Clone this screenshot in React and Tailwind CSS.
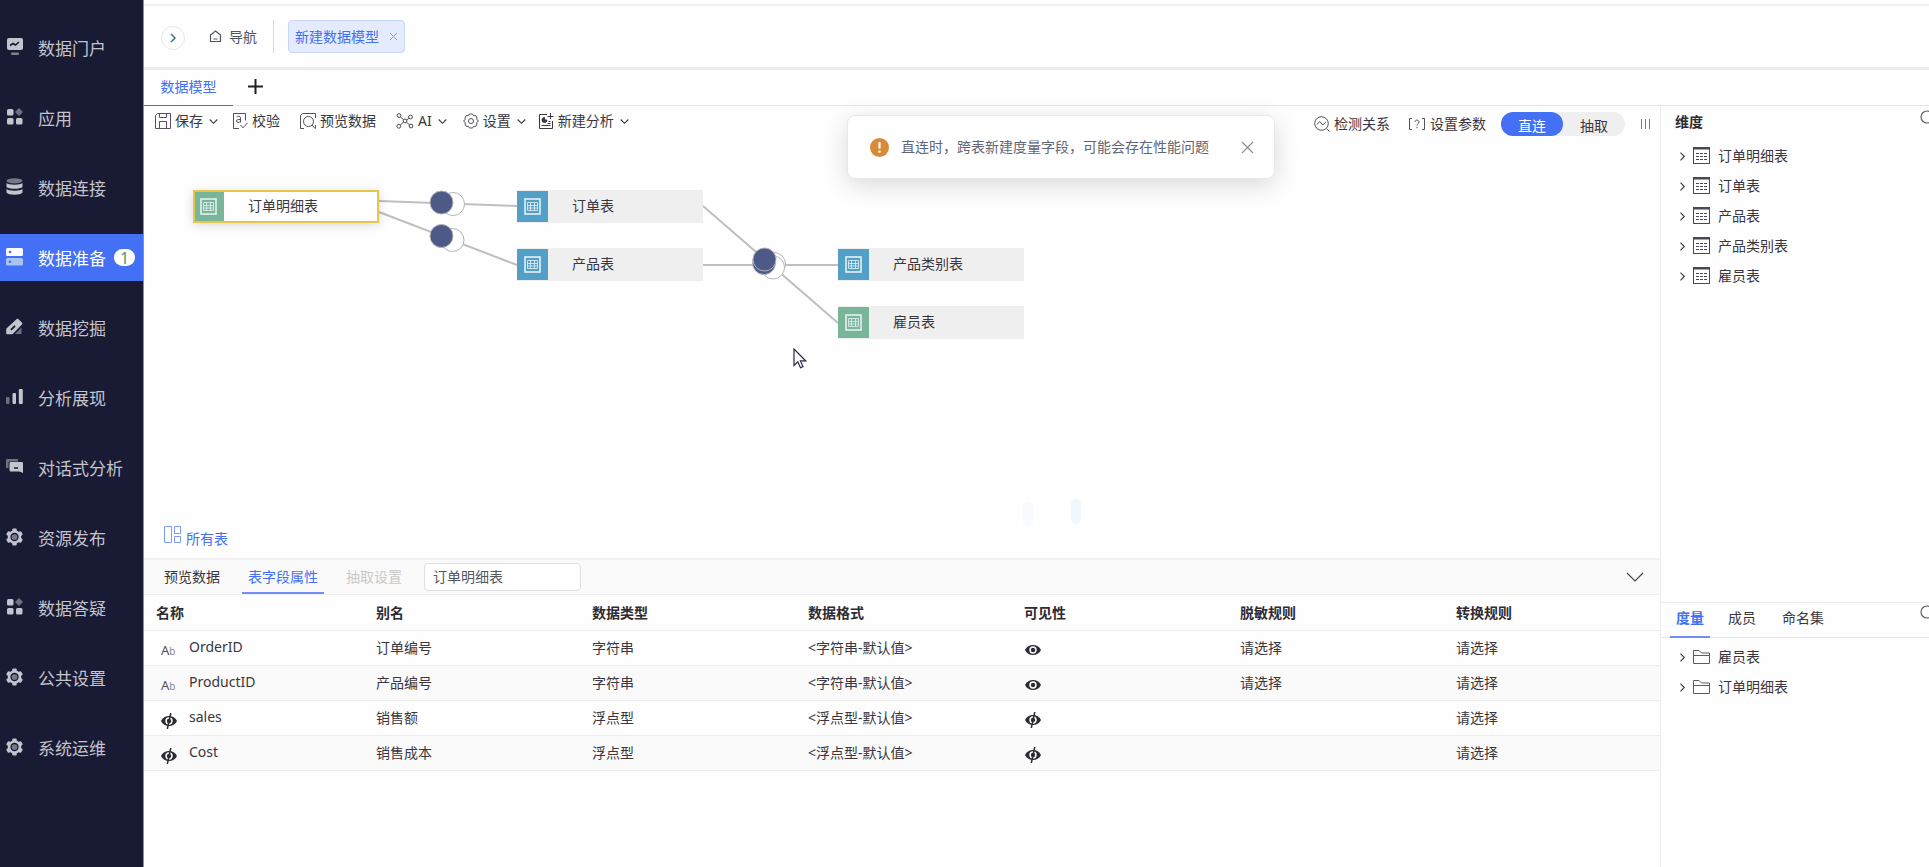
import { useState } from "react";

const menuItems = [
  { label: "数据门户", icon: PortalIcon },
  { label: "应用", icon: AppsIcon },
  { label: "数据连接", icon: DatabaseIcon },
  { label: "数据准备", icon: ServerIcon, badge: 1 },
  { label: "数据挖掘", icon: DigIcon },
  { label: "分析展现", icon: BarsIcon },
  { label: "对话式分析", icon: ChatIcon },
  { label: "资源发布", icon: GearIcon },
  { label: "数据答疑", icon: AppsIcon },
  { label: "公共设置", icon: GearIcon },
  { label: "系统运维", icon: GearIcon },
];

const nodes = [
  { name: "订单明细表", x: 49, y: 50, tone: "green", selected: true },
  { name: "订单表", x: 373, y: 50, tone: "blue" },
  { name: "产品表", x: 373, y: 108, tone: "blue" },
  { name: "产品类别表", x: 694, y: 108, tone: "blue" },
  { name: "雇员表", x: 694, y: 166, tone: "green" },
];

const columns = [
  "名称",
  "别名",
  "数据类型",
  "数据格式",
  "可见性",
  "脱敏规则",
  "转换规则",
];

const fields = [
  { name: "OrderID", alias: "订单编号", type: "字符串", visible: true },
  { name: "ProductID", alias: "产品编号", type: "字符串", visible: true },
  { name: "sales", alias: "销售额", type: "浮点型", visible: false },
  { name: "Cost", alias: "销售成本", type: "浮点型", visible: false },
];

const dimensions = ["订单明细表", "订单表", "产品表", "产品类别表", "雇员表"];
const measures = ["雇员表", "订单明细表"];

/* ---------- sidebar icons ---------- */

function PortalIcon() {
  return (
    <svg width="17" height="18" viewBox="0 0 17 18" fill="currentColor">
      <rect x="1" y="0" width="16" height="12" rx="2" />
      <path d="M4 7.500l3-2 2.500 1.500L13 4" fill="none" stroke="#191b34" strokeWidth="1.600" />
      <rect x="5" y="14.500" width="8" height="2.500" rx="1" opacity=".6" />
    </svg>
  );
}

function AppsIcon() {
  return (
    <svg width="17" height="18" viewBox="0 0 17 18" fill="currentColor">
      <rect x="1" y="1" width="6.500" height="6.500" rx="1.500" />
      <rect x="1" y="10" width="6.500" height="6.500" rx="1.500" />
      <rect x="10" y="10" width="6.500" height="6.500" rx="1.500" />
      <path d="M13 0l4 4-4 4-4-4z" opacity=".5" />
    </svg>
  );
}

function DatabaseIcon() {
  return (
    <svg width="17" height="18" viewBox="0 0 17 18" fill="currentColor">
      <ellipse cx="8.500" cy="2.800" rx="8" ry="2.600" opacity=".55" />
      <path d="M.5 5c2 2.200 14 2.200 16 0v4c-2 2.400-14 2.400-16 0z" />
      <path d="M.5 11c2 2.200 14 2.200 16 0v3.500c-2 3-14 3-16 0z" />
    </svg>
  );
}

function ServerIcon() {
  return (
    <svg width="17" height="18" viewBox="0 0 17 18">
      <rect x="0" y="0" width="17" height="8" rx="1.500" fill="#fff" />
      <rect x="0" y="10" width="17" height="7.500" rx="1.500" fill="#a9c3f2" />
      <circle cx="4" cy="4" r="1.300" fill="#4370f5" />
      <circle cx="4" cy="13.800" r="1.300" fill="#4370f5" />
    </svg>
  );
}

function DigIcon() {
  return (
    <svg width="17" height="18" viewBox="0 0 17 18" fill="currentColor">
      <path d="M15.500 9.500V16H9z" opacity=".5" />
      <path d="M10.500 1.200c.6-.6 1.400-.6 2 0l3.400 3.300c.6.6.6 1.400 0 2L7 15.800c-.3.3-.7.5-1.200.5H1.500c-.8 0-1.300-.5-1.300-1.300v-3.500c0-.5.2-1 .5-1.300z" />
      <path d="M5.500 11.300l3-3" stroke="#191b34" strokeWidth="1.900" strokeLinecap="round" />
    </svg>
  );
}

function BarsIcon() {
  return (
    <svg width="17" height="18" viewBox="0 0 17 18" fill="currentColor">
      <rect x="0" y="9" width="3.500" height="7" rx="1" opacity=".5" />
      <rect x="6.500" y="5" width="3.500" height="11" rx="1" />
      <rect x="12.800" y="1" width="4" height="15" rx="1" />
    </svg>
  );
}

function ChatIcon() {
  return (
    <svg width="17" height="18" viewBox="0 0 17 18">
      <path d="M0 2.500C0 1.700.5 1 1.500 1H12v2.500H4c-1 0-1.500.5-1.500 1.500v5H0z" fill="currentColor" opacity=".5" />
      <path d="M5 4h10.500c1 0 1.500.5 1.500 1.500V15l-3.500-1.500H5c-1 0-1.500-.6-1.500-1.500V5.500C3.500 4.500 4 4 5 4z" fill="currentColor" />
      <path d="M8 10h4" stroke="#191b34" strokeWidth="1.500" />
    </svg>
  );
}

function GearIcon() {
  return (
    <svg width="17" height="18" viewBox="0 0 17 18">
      <g fill="currentColor">
        <circle cx="8.500" cy="9" r="6.800" />
        <rect x="6.300" y=".5" width="4.400" height="17" rx="1" />
        <rect x="6.300" y=".5" width="4.400" height="17" rx="1" transform="rotate(60 8.500 9)" />
        <rect x="6.300" y=".5" width="4.400" height="17" rx="1" transform="rotate(120 8.500 9)" />
      </g>
      <circle cx="8.500" cy="9" r="3.500" fill="#77788a" stroke="#191b34" strokeWidth="1.300" />
    </svg>
  );
}

/* ---------- line icons ---------- */

function LineIcon({ size = 16, className = "", children }) {
  return (
    <svg
      width={size}
      height={size}
      viewBox="0 0 16 16"
      fill="none"
      stroke="currentColor"
      className={`shrink-0 ${className}`}
    >
      {children}
    </svg>
  );
}

function Chevron({ direction = "down", className = "" }) {
  return (
    <svg
      width="9"
      height="9"
      viewBox="0 0 9 9"
      fill="none"
      stroke="currentColor"
      strokeWidth="1.100"
      className={`shrink-0 ${className}`}
    >
      <path d={direction === "down" ? "M.7 2.500l3.800 3.800 3.800-3.800" : "M2.500.7l3.800 3.800-3.800 3.800"} />
    </svg>
  );
}

function SaveIcon() {
  return (
    <LineIcon className="text-[#5b4f5c]">
      <path d="M2.500.5h13v15H.5v-13z" />
      <path d="M4.500 1v3.500h7V1M4.500 15V8.500h7V15" />
    </LineIcon>
  );
}

function CheckIcon() {
  return (
    <LineIcon className="text-[#55505a]">
      <path d="M13.500 7.500v-7h-12v15H7" />
      <path d="M4.500 4c1-1.200 4-1.200 4 .8v4.700M8.500 6.500c-2 0-4.200 0-4.200 1.500S7.500 10 8.500 8" />
      <path d="M8.500 12l2.500 2.800 4.500-5" />
    </LineIcon>
  );
}

function PreviewIcon() {
  return (
    <LineIcon className="text-[#55505a]">
      <path d="M4 15.500H.5v-13l2-2h13V5M15.500 12v3.500" />
      <circle cx="8.500" cy="8.500" r="5" />
      <path d="M12 12l3 3.500" />
    </LineIcon>
  );
}

function AiIcon() {
  return (
    <svg width="18" height="16" viewBox="0 0 18 16" fill="none" stroke="#4e4a55" className="shrink-0">
      <circle cx="3" cy="2.500" r="1.900" />
      <circle cx="14.500" cy="4" r="1.900" />
      <circle cx="9" cy="8" r="1.900" />
      <circle cx="2.800" cy="13.300" r="1.900" />
      <circle cx="15" cy="13" r="1.900" />
      <path d="M4.400 4L7.600 6.700M10.700 7L13 5.200M7.400 9.200L4.300 12M10.500 9.300l3 2.500" />
    </svg>
  );
}

function SettingIcon() {
  return (
    <LineIcon className="text-[#55505a]">
      <path d="M5.500 2.500L6.500 1h3l1 1.500 2.500.3L14 5l-.3 1.500L15.500 8l-1.800 1.500L14 11l-1 2.200-2.500.3-1 1.500h-3l-1-1.500-2.500-.3L2 11l.3-1.500L.5 8l1.800-1.500L2 5l1-2.200z" />
      <circle cx="8" cy="8" r="2.500" />
    </LineIcon>
  );
}

function NewAnalysisIcon() {
  return (
    <LineIcon className="text-[#3c3844]">
      <path d="M9 1.500H1.500v14h13V8M12.500 0v6M9.500 3.500h6M3.500 12.500h9M9.500 10.500h3M10.500 8.500h2" />
      <path d="M6.500 4.500A2.500 2.500 0 1 0 9 7H6.500z" fill="currentColor" />
    </LineIcon>
  );
}

function DetectIcon() {
  return (
    <LineIcon className="text-[#55505a]">
      <circle cx="7.500" cy="7.500" r="6.800" />
      <path d="M12.500 12.500l3 3M3 8.500l2.700-3 3.200 3.500 3-3" />
    </LineIcon>
  );
}

function SheetIcon() {
  return (
    <svg width="17" height="18" viewBox="0 0 17 18" fill="none" stroke="#4c4757" className="shrink-0">
      <rect x=".5" y=".5" width="16" height="16" />
      <path d="M0 1.500h17" strokeWidth="2" />
      <path d="M3 6.500h11M3 9.500h11M3 12.500h11" strokeDasharray="3 1" />
    </svg>
  );
}

function FolderIcon() {
  return (
    <svg width="17" height="16" viewBox="0 0 17 16" fill="none" stroke="#5c5a68" className="shrink-0">
      <path d="M.5 14.500v-13H6l2.500 2.500h8v10.500zM.5 6.500h16" />
    </svg>
  );
}

function NodeTableIcon() {
  return (
    <svg width="17" height="17" viewBox="0 0 17 17" fill="none" stroke="#e6f1f2">
      <rect x="1" y="1" width="15" height="15" strokeWidth="1.600" />
      <path d="M3.500 4.500h10v8h-10zM3.500 7.500h10M3.500 10h10M6.500 4.500v8M10.500 4.500v8" strokeOpacity=".8" />
    </svg>
  );
}

function EyeIcon({ off = false }) {
  return (
    <svg width="16" height="16" viewBox="0 0 16 16" className="shrink-0">
      <path d="M0 8c3-6.600 13-6.600 16 0-3 6.600-13 6.600-16 0z" fill="#2e2a35" />
      <circle cx="8" cy="8" r="3.700" fill="#fff" />
      <circle cx="8" cy="8" r="2.200" fill="#2e2a35" />
      {off && <path d="M9.800 0L6.300 16" stroke="#2e2a35" strokeWidth="1.500" />}
    </svg>
  );
}

function SearchIcon() {
  return (
    <svg width="16" height="16" viewBox="0 0 16 16" fill="none" stroke="#5f5f66" strokeWidth="1.200">
      <circle cx="7" cy="7" r="6" />
      <path d="M11.500 11.500l4 4" />
    </svg>
  );
}

/* ---------- page parts ---------- */

function Sidebar() {
  const [active, setActive] = useState("数据准备");

  return (
    <nav className="flex w-36 shrink-0 flex-col gap-[23px] border-r border-[#8d8e9e] bg-[#191b34] pt-6">
      {menuItems.map(({ label, icon: Icon, badge }) => (
        <button
          key={label}
          onClick={() => setActive(label)}
          className={`flex h-[47px] w-full items-center whitespace-nowrap pl-1.5 text-left text-[17px] ${
            active === label ? "bg-[#4370f5] text-white" : "text-[#c3c4cd]"
          }`}
        >
          <span className="pb-0.5">
            <Icon />
          </span>
          <span className="ml-[15px] pt-0.5">{label}</span>
          {badge && (
            <span className="ml-2 flex h-[17px] w-[21px] items-center justify-center rounded-full bg-white text-base leading-none text-[#4a9a70]">
              {badge}
            </span>
          )}
        </button>
      ))}
    </nav>
  );
}

function TopBar() {
  return (
    <header className="mt-1 flex h-[66px] shrink-0 items-center border-t-2 border-b-[3px] border-t-[#f0f0f2] border-b-[#e9ebef] pl-[17px]">
      <button
        aria-label="展开"
        className="mt-0.5 flex h-6 w-6 items-center justify-center rounded-full border border-[#e3e7f0] text-[#3f6f86]"
      >
        <svg width="6" height="10" viewBox="0 0 6 10" fill="none" stroke="currentColor" strokeWidth="1.500">
          <path d="M1 1l4 4-4 4" />
        </svg>
      </button>
      <a href="#home" className="ml-6 flex items-center gap-[7px] text-sm text-[#4d5562]">
        <svg width="13" height="13" viewBox="0 0 13 13" fill="none" stroke="currentColor" strokeWidth="1.200">
          <path d="M1.500 11.500V5L6.500 1l5 4v6.500zM4.500 9h4" />
        </svg>
        导航
      </a>
      <span className="ml-4 h-[33px] w-px bg-[#cdd9f2]" />
      <div className="ml-3.5 flex h-[33px] items-center gap-2.5 rounded border border-[#c8d7fb] bg-[#e3ebfd] px-1.5 text-sm text-[#4370f5]">
        <a href="#model">新建数据模型</a>
        <button aria-label="关闭标签" className="text-[#7f9cf0]">
          <svg width="9" height="9" viewBox="0 0 9 9" stroke="currentColor">
            <path d="M1 1l7 7M8 1L1 8" />
          </svg>
        </button>
      </div>
    </header>
  );
}

function ModelTabs() {
  return (
    <div className="flex h-9 shrink-0 items-stretch border-b border-[#e4e5e7]">
      <button className="-mb-px w-[89px] border-b border-[#4370f5] pb-0.5 text-sm text-[#4370f5]">
        数据模型
      </button>
      <button aria-label="新增" className="ml-[15px] pb-0.5 text-[#1f2024]">
        <svg width="15" height="15" viewBox="0 0 15 15" stroke="currentColor" strokeWidth="2">
          <path d="M0 7.500h15M7.500 0v15" />
        </svg>
      </button>
    </div>
  );
}

function ToolButton({ icon, label, chevron, className = "" }) {
  return (
    <button className={`flex items-center gap-1 ${className}`}>
      {icon}
      {label}
      {chevron && <Chevron className="ml-0.5" />}
    </button>
  );
}

function Toolbar() {
  const [mode, setMode] = useState("直连");

  return (
    <div className="flex h-[34px] shrink-0 items-center whitespace-nowrap text-sm text-[#3a3640]">
      <div className="flex items-center pb-1 pl-[11px]">
        <ToolButton icon={<SaveIcon />} label="保存" chevron />
        <ToolButton className="ml-3.5" icon={<CheckIcon />} label="校验" />
        <ToolButton className="ml-5" icon={<PreviewIcon />} label="预览数据" />
        <ToolButton className="ml-5" icon={<AiIcon />} label="AI" chevron />
        <ToolButton className="ml-4" icon={<SettingIcon />} label="设置" chevron />
        <ToolButton className="ml-3" icon={<NewAnalysisIcon />} label="新建分析" chevron />
      </div>

      <div className="ml-auto flex items-center pt-0.5 pr-2.5">
        <ToolButton icon={<DetectIcon />} label="检测关系" />
        <ToolButton
          className="ml-[18px]"
          icon={
            <svg width="18" height="14" viewBox="0 0 18 14" fill="none" stroke="#55505a">
              <path d="M4 1.500H1.500v11H4M14 1.500h2.500v11H14M7 5c0-2.500 4-2.500 4 0 0 1.500-2 1.500-2 3.500M9 10v1.200" />
            </svg>
          }
          label="设置参数"
        />
        <div className="ml-[15px] flex h-6 items-stretch rounded-full bg-[#efeff0]">
          {["直连", "抽取"].map((item) => (
            <button
              key={item}
              onClick={() => setMode(item)}
              className={`w-[62px] rounded-full pt-1 leading-5 ${mode === item ? "bg-[#4370f5] text-white" : ""}`}
            >
              {item}
            </button>
          ))}
        </div>
        <button aria-label="更多" className="ml-4 flex gap-[3px]">
          <span className="h-2.5 w-px bg-[#77777d]" />
          <span className="h-2.5 w-px bg-[#77777d]" />
          <span className="h-2.5 w-px bg-[#77777d]" />
        </button>
      </div>
    </div>
  );
}

function TableNode({ node }) {
  return (
    <div
      className={`absolute flex h-[33px] w-[186px] text-sm text-[#3a3640] ${
        node.selected
          ? "bg-white shadow-[0_2px_10px_rgba(0,0,0,0.15)] outline-2 -outline-offset-2 outline-[#e8c547]"
          : "bg-[#efefef]"
      }`}
      style={{ left: node.x, top: node.y }}
    >
      <span
        className={`my-px flex w-[31px] items-center justify-center ${
          node.tone === "green" ? "bg-[#79b598]" : "bg-[#529fc8]"
        }`}
      >
        <NodeTableIcon />
      </span>
      <span className="self-center pb-0.5 pl-6">{node.name}</span>
    </div>
  );
}

function ModelCanvas() {
  return (
    <div className="relative min-h-0 flex-1 overflow-hidden">
      <svg className="absolute inset-0 h-full w-full" fill="none">
        <g stroke="#bfbfbf" strokeWidth="2">
          <path d="M235 61l138 5M235 72l138 53M559 66l135 117M559 125h135" />
        </g>
        <g stroke="#b4b4b8">
          <circle cx="309" cy="64" r="11.500" fill="#fff" />
          <circle cx="297.500" cy="62.500" r="11.500" fill="#4d5a87" />
          <circle cx="308.500" cy="100" r="11.500" fill="#fff" />
          <circle cx="297.500" cy="96" r="11.500" fill="#4d5a87" />
          <circle cx="630" cy="124" r="11.500" fill="#fff" />
          <circle cx="629" cy="127.500" r="11.500" fill="#fff" />
          <circle cx="620" cy="123" r="11.500" fill="#4d5a87" />
          <circle cx="620.500" cy="119.500" r="11.500" fill="#4d5a87" />
        </g>
        <rect x="879" y="362" width="10" height="24" rx="5" fill="#f8fafd" />
        <rect x="927" y="359" width="10" height="25" rx="5" fill="#f1f7fb" />
      </svg>
      {nodes.map((node) => (
        <TableNode key={node.name} node={node} />
      ))}
      <svg
        width="14"
        height="21"
        viewBox="0 0 14 21"
        fill="#fff"
        stroke="#2d2b45"
        strokeWidth="1.200"
        className="absolute top-[208px] left-[649px]"
      >
        <path d="M1 1v16.500l3.800-3.700 2.700 6 2.500-1.200-2.600-5.800h5.200z" />
      </svg>
    </div>
  );
}

function FieldPanel() {
  const [tab, setTab] = useState("表字段属性");

  return (
    <section className="h-[309px] shrink-0 border-t-2 border-[#f1f1f2] text-sm text-[#3a3640]">
      <div className="flex h-[35px] items-stretch border-b border-[#eeeeef] bg-[#fafafa] pl-3.5">
        {["预览数据", "表字段属性", "抽取设置"].map((item) => (
          <button
            key={item}
            disabled={item === "抽取设置"}
            onClick={() => setTab(item)}
            className={`mr-4 border-b-2 px-1.5 pt-0.5 ${
              tab === item ? "border-[#6f8ff5] text-[#4370f5]" : "border-transparent"
            } disabled:text-[#c8c8c8]`}
          >
            {item}
          </button>
        ))}
        <select
          aria-label="数据表"
          className="h-7 w-[157px] appearance-none self-center rounded border border-[#dfdfe2] bg-white px-2 text-[#55555c]"
        >
          <option>订单明细表</option>
        </select>
        <button aria-label="收起" className="mr-4 ml-auto">
          <svg width="18" height="10" viewBox="0 0 18 10" fill="none" stroke="#4a4550" strokeWidth="1.200">
            <path d="M1 1l8 8 8-8" />
          </svg>
        </button>
      </div>
      <table className="w-full table-fixed border-collapse text-left">
        <thead>
          <tr className="h-[35px] border-b border-[#ececee] text-[#2e2b33]">
            {columns.map((column) => (
              <th key={column} className="w-[14.25%] px-4 pt-0.5 font-semibold first:pl-3 last:w-auto">
                {column}
              </th>
            ))}
          </tr>
        </thead>
        <tbody>
          {fields.map((field) => (
            <tr key={field.name} className="h-[35px] border-b border-[#ececee] even:bg-[#fafafa]">
              <td className="pr-4 pb-0.5 pl-[17px]">
                <div className="flex items-center gap-3">
                  {field.visible ? (
                    <span className="w-4 pt-2 text-[13px] leading-none text-[#55505a]">
                      A<span className="text-[10px] text-[#8b8790]">b</span>
                    </span>
                  ) : (
                    <span className="pt-2">
                      <EyeIcon off />
                    </span>
                  )}
                  <span>{field.name}</span>
                </div>
              </td>
              <td className="px-4">{field.alias}</td>
              <td className="px-4">{field.type}</td>
              <td className="px-4">{`<${field.type}-默认值>`}</td>
              <td className="px-[17px]">
                <button aria-label={field.visible ? "可见" : "隐藏"} className="block pt-1">
                  <EyeIcon off={!field.visible} />
                </button>
              </td>
              <td className="px-4">{field.visible && "请选择"}</td>
              <td className="px-4">请选择</td>
            </tr>
          ))}
        </tbody>
      </table>
    </section>
  );
}

function Tree({ items, icon: Icon }) {
  return (
    <ul>
      {items.map((item) => (
        <li key={item} className="flex h-[30px] items-center pl-[17px]">
          <button className="flex items-center">
            <Chevron direction="right" />
            <span className="mr-2 ml-1.5">
              <Icon />
            </span>
            {item}
          </button>
        </li>
      ))}
    </ul>
  );
}

function DataPanel() {
  return (
    <aside className="flex w-[269px] shrink-0 flex-col overflow-hidden border-l border-[#ececee] text-sm text-[#3a3640]">
      <div className="min-h-0 flex-1">
        <div className="flex h-[35px] items-start justify-between pt-1 pl-3.5">
          <h2 className="pt-0.5 font-semibold text-[#2e2b33]">维度</h2>
          <button aria-label="搜索维度" className="-mr-[7px]">
            <SearchIcon />
          </button>
        </div>
        <Tree items={dimensions} icon={SheetIcon} />
      </div>
      <div className="h-[265px] border-t border-[#ececee]">
        <div className="mb-1 flex h-[35px] items-stretch border-b border-[#e4e5e7] pl-[9px]">
          <button className="-mb-px border-b-2 border-[#6f8ff5] px-1.5 pb-1 font-semibold text-[#4370f5]">度量</button>
          <button className="ml-3 px-1.5 pb-1">成员</button>
          <button className="ml-3.5 px-1.5 pb-1">命名集</button>
          <button aria-label="搜索度量" className="mt-0.5 -mr-[7px] ml-auto self-start">
            <SearchIcon />
          </button>
        </div>
        <Tree items={measures} icon={FolderIcon} />
      </div>
    </aside>
  );
}

function Toast({ onClose }) {
  return (
    <div
      role="alert"
      className="absolute top-[115px] left-[703px] flex h-16 w-[428px] items-center rounded-lg border border-[#e8e8ea] bg-white pl-[22px] text-sm text-[#606675] shadow-[0_6px_24px_rgba(0,0,0,0.15)]"
    >
      <svg width="19" height="19" viewBox="0 0 19 19">
        <circle cx="9.500" cy="9.500" r="9.500" fill="#d98a38" />
        <path d="M9.500 4v6.500M9.500 12.500v2.300" stroke="#fff" strokeWidth="2.200" />
      </svg>
      <span className="ml-3">直连时，跨表新建度量字段，可能会存在性能问题</span>
      <button aria-label="关闭" onClick={onClose} className="mr-5 ml-auto text-[#8b8d94]">
        <svg width="13" height="13" viewBox="0 0 13 13" stroke="currentColor" strokeWidth="1.200">
          <path d="M1 1l11 11M12 1L1 12" />
        </svg>
      </button>
    </div>
  );
}

export default function App() {
  const [toastOpen, setToastOpen] = useState(true);

  return (
    <div
      lang="zh-CN"
      className="flex h-screen overflow-hidden bg-[#fefefe] font-['Noto_Sans','Noto_Sans_CJK_SC',sans-serif]"
    >
      <Sidebar />
      <main className="relative flex min-w-0 flex-1 flex-col">
        <TopBar />
        <ModelTabs />
        <div className="flex min-h-0 flex-1">
          <div className="flex min-w-0 flex-1 flex-col">
            <Toolbar />
            <ModelCanvas />
            <a href="#all" className="flex h-8 shrink-0 items-center gap-[5px] pb-1.5 pl-5 text-sm text-[#4370f5]">
              <svg width="17" height="17" viewBox="0 0 17 17" fill="none" stroke="#7d99f7" className="mb-[9px]">
                <path d="M.5.5h7v16h-7zM10.500.5h6v7h-6zM10.500 10.500h6v6h-6z" />
              </svg>
              所有表
            </a>
            <FieldPanel />
          </div>
          <DataPanel />
        </div>
        {toastOpen && <Toast onClose={() => setToastOpen(false)} />}
      </main>
    </div>
  );
}
